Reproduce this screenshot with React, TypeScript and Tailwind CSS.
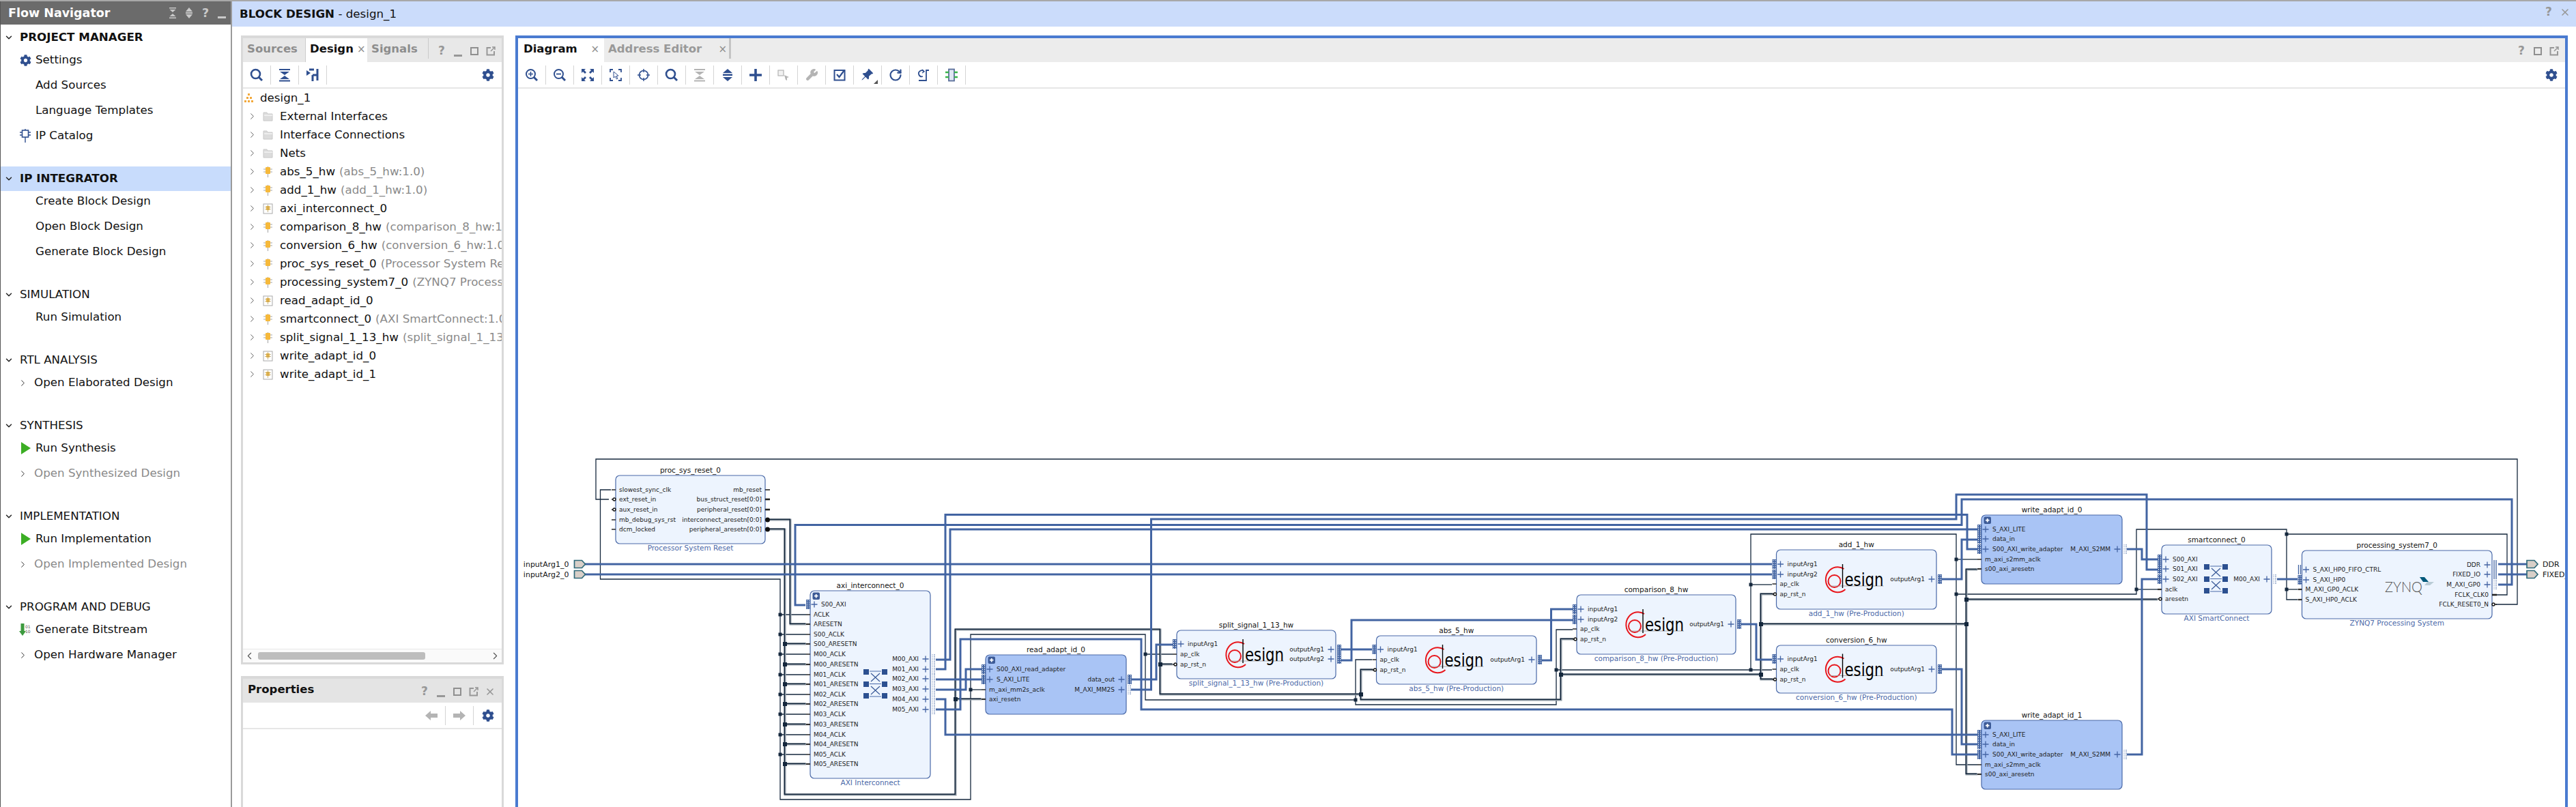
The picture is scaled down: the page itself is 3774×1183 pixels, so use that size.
import { ChevronDown, ChevronRight, ChevronLeft, RotateCw, Wrench, X } from 'lucide-react';
import { FaCog } from 'react-icons/fa';
import { BsPinAngleFill } from 'react-icons/bs';

const NAVY = '#2f4f8f';
const GRAY = '#b4b4b4';

// ---------- small window buttons ----------
function WinBtn({ kind }: { kind: string }) {
  return (
    <div className="flex h-6 w-6 items-center justify-center text-[#979797]">
      {kind === '?' && <span className="text-[17px] font-bold">?</span>}
      {kind === '_' && <div className="mt-[12px] h-[3px] w-[12px] bg-[#979797]" />}
      {kind === 'box' && <div className="h-[12px] w-[12px] border-2 border-[#8f8f8f]" />}
      {kind === 'pop' && (
        <svg width="14" height="14" viewBox="0 0 14 14">
          <path d="M7 2H1.5V12.5H12V7" fill="none" stroke="#979797" strokeWidth="2" />
          <path d="M7 7L13 1M9 1H13V5" fill="none" stroke="#979797" strokeWidth="1.5" />
        </svg>
      )}
      {kind === 'x' && <X size={16} strokeWidth={2.4} color="#979797" />}
    </div>
  );
}

function Mag({ children, w = 2 }: { children?: React.ReactNode; w?: number }) {
  return (
    <svg width="20" height="20" viewBox="0 0 20 20">
      <circle cx="8.5" cy="8.5" r="6.5" fill="none" stroke={NAVY} strokeWidth={w} />
      <path d="M13 13L18 18" stroke={NAVY} strokeWidth="3" />
      {children}
    </svg>
  );
}

const toolbarIcons = [
  <Mag key="zi"><path d="M8.5 5V12M5 8.5H12" stroke={NAVY} strokeWidth="1.6" /></Mag>,
  <Mag key="zo"><path d="M5 8.5H12" stroke={NAVY} strokeWidth="1.8" /></Mag>,
  <svg key="fit" width="20" height="20" viewBox="0 0 20 20" fill={NAVY}>
    <path d="M1 1H7L5 3L8 6L6 8L3 5L1 7Z" />
    <path d="M19 1H13L15 3L12 6L14 8L17 5L19 7Z" />
    <path d="M1 19H7L5 17L8 14L6 12L3 15L1 13Z" />
    <path d="M19 19H13L15 17L12 14L14 12L17 15L19 13Z" />
  </svg>,
  <svg key="sel" width="20" height="20" viewBox="0 0 20 20" fill="none">
    <path d="M6 2H2V6M14 2H18V6M2 14V18H6M18 14V18H14" stroke={NAVY} strokeWidth="1.8" />
    <path d="M7 5L7 14L9.5 12L11.5 16L13 15L11 11.5L14 11Z" stroke={NAVY} strokeWidth="1" fill="#fff" />
  </svg>,
  <svg key="cross" width="20" height="20" viewBox="0 0 20 20" fill="none">
    <circle cx="10" cy="10" r="6.5" stroke={NAVY} strokeWidth="1.6" />
    <path d="M10 1V6M10 14V19M1 10H6M14 10H19" stroke={NAVY} strokeWidth="1.4" />
  </svg>,
  <Mag key="search" w={2.6} />,
  <svg key="col" width="20" height="20" viewBox="0 0 20 20" fill={GRAY}>
    <path d="M2 1H18V3H2ZM3 5H17L10 10ZM10 11L17 16H3ZM2 17.5H18V19.5H2Z" />
  </svg>,
  <svg key="exp" width="20" height="20" viewBox="0 0 20 20" fill={NAVY}>
    <path d="M10 1L17 7H3ZM3 8.5H17V11H3ZM3 13H17L10 19Z" />
  </svg>,
  <svg key="plus" width="20" height="20" viewBox="0 0 20 20">
    <path d="M10 1V19M1 10H19" stroke={NAVY} strokeWidth="3.6" />
  </svg>,
  <svg key="dis" width="20" height="20" viewBox="0 0 20 20" fill="none">
    <rect x="2" y="3" width="8" height="8" stroke={GRAY} strokeWidth="1.2" fill="#f1f1f1" />
    <path d="M11 10L18 13L15 14L15 18L13 17Z" fill={GRAY} />
  </svg>,
  <Wrench key="wr" size={19} color={GRAY} fill={GRAY} strokeWidth={1.5} />,
  <svg key="chk" width="20" height="20" viewBox="0 0 20 20" fill="none">
    <rect x="2.5" y="3" width="15" height="14.5" stroke={NAVY} strokeWidth="2" />
    <path d="M6 9L9.5 13L17 3" stroke={NAVY} strokeWidth="2.2" />
  </svg>,
  <div key="pin" className="relative h-5 w-5">
    <BsPinAngleFill size={19} color={NAVY} />
    <div className="absolute -bottom-[3px] -right-[5px] h-0 w-0 border-b-[6px] border-l-[6px] border-b-[#555] border-l-transparent" />
  </div>,
  <RotateCw key="rot" size={20} color={NAVY} strokeWidth={2.6} />,
  <svg key="reg" width="20" height="20" viewBox="0 0 20 20" fill="none">
    <path d="M11 5A4.5 4.5 0 1 0 9 12" stroke={NAVY} strokeWidth="1.8" />
    <path d="M8 2L11 5L8 7" stroke={NAVY} strokeWidth="1.4" />
    <path d="M18 3H14V18H3" stroke={NAVY} strokeWidth="1.8" />
  </svg>,
  <svg key="chip" width="20" height="20" viewBox="0 0 20 20" fill="none">
    <rect x="6" y="1.5" width="8" height="17" stroke="#5a6f9a" strokeWidth="1.8" fill="#dfe6f3" />
    <path d="M1 6H6M14 6H19M1 13H6M14 13H19" stroke="#39b54a" strokeWidth="2.4" />
  </svg>,
];

// ---------- nav ----------
type NavItem = { label: string; icon?: string; muted?: boolean };
type NavSection = { title: string; bold?: boolean; active?: boolean; items: NavItem[] };

const navSections: NavSection[] = [
  {
    title: 'PROJECT MANAGER',
    bold: true,
    items: [{ label: 'Settings', icon: 'gear' }, { label: 'Add Sources' }, { label: 'Language Templates' }, { label: 'IP Catalog', icon: 'ip' }],
  },
  {
    title: 'IP INTEGRATOR',
    bold: true,
    active: true,
    items: [{ label: 'Create Block Design' }, { label: 'Open Block Design' }, { label: 'Generate Block Design' }],
  },
  { title: 'SIMULATION', items: [{ label: 'Run Simulation' }] },
  { title: 'RTL ANALYSIS', items: [{ label: 'Open Elaborated Design', icon: 'chev' }] },
  {
    title: 'SYNTHESIS',
    items: [{ label: 'Run Synthesis', icon: 'play' }, { label: 'Open Synthesized Design', icon: 'chev', muted: true }],
  },
  {
    title: 'IMPLEMENTATION',
    items: [{ label: 'Run Implementation', icon: 'play' }, { label: 'Open Implemented Design', icon: 'chev', muted: true }],
  },
  {
    title: 'PROGRAM AND DEBUG',
    items: [{ label: 'Generate Bitstream', icon: 'bit' }, { label: 'Open Hardware Manager', icon: 'chev' }],
  },
];

function NavIcon({ icon }: { icon: string }) {
  if (icon === 'gear') return <FaCog size={17} color={NAVY} />;
  if (icon === 'ip')
    return (
      <svg width="18" height="20" viewBox="0 0 18 20" fill="none">
        <rect x="4.5" y="2" width="9" height="10" stroke={NAVY} strokeWidth="1.6" />
        <path d="M9 0V2M9 12V20M1 5H4.5M1 9H4.5M13.5 5H17M13.5 9H17" stroke={NAVY} strokeWidth="1.4" />
      </svg>
    );
  if (icon === 'play')
    return (
      <svg width="15" height="18" viewBox="0 0 15 18">
        <path d="M1 0L15 9L1 18Z" fill="#3cae24" />
      </svg>
    );
  if (icon === 'bit')
    return (
      <svg width="18" height="18" viewBox="0 0 18 18">
        <path d="M2.5 0H7.5V11H10L5 18L0 11H2.5Z" fill="#3d9a3f" />
        <text x="9" y="7" fontSize="6" fill="#555">01</text>
        <text x="9" y="14" fontSize="6" fill="#555">10</text>
      </svg>
    );
  return null;
}

function FlowNavigator() {
  return (
    <div className="flex w-[340px] shrink-0 flex-col border-x border-r-2 border-l-[#555] border-r-[#9a9a9a] bg-white">
      <div className="flex h-[34px] items-center bg-[#6b6b6b] pl-[11px] pr-[1px] text-[17.5px] font-bold text-white">
        <span className="flex-1">Flow Navigator</span>
        <div className="flex w-6 justify-center">
          <svg width="12" height="16" viewBox="0 0 12 16" fill="#c9c9c9">
            <path d="M1 0H11V1.5H1ZM1.5 3H10.5L6 7ZM6 9L10.5 13H1.5ZM1 14.5H11V16H1Z" />
          </svg>
        </div>
        <div className="flex w-6 justify-center">
          <svg width="12" height="16" viewBox="0 0 12 16" fill="#c9c9c9">
            <path d="M6 0L11 6H1ZM1 7H11V9H1ZM1 10H11L6 16Z" />
          </svg>
        </div>
        <span className="w-6 text-center text-[#c9c9c9]">?</span>
        <div className="flex w-6 justify-center">
          <div className="mt-[12px] h-[3px] w-[12px] bg-[#c9c9c9]" />
        </div>
      </div>
      <div className="flex flex-col gap-[30px] pt-px text-[16.7px] text-[#111]">
        {navSections.map((section) => (
          <div key={section.title}>
            <div className={`flex h-9 items-center ${section.active ? 'bg-[#c8dcfc]' : ''} ${section.bold ? 'font-bold' : ''}`}>
              <ChevronDown size={14} strokeWidth={2.5} className="ml-[5px] text-[#222]" />
              <span className="ml-[9px]">{section.title}</span>
            </div>
            <div className="flex flex-col gap-[7px]">
              {section.items.map((item) => (
                <div key={item.label} className={`flex h-[30px] items-center ${item.muted ? 'text-[#8a8a8a]' : ''}`}>
                  {item.icon === 'chev' ? (
                    <>
                      <ChevronRight size={15} strokeWidth={1.6} className="ml-[25px] text-[#333]" />
                      <span className="ml-[9px]">{item.label}</span>
                    </>
                  ) : (
                    <>
                      <div className="ml-[27px] flex w-[18px] justify-center">{item.icon && <NavIcon icon={item.icon} />}</div>
                      <span className="ml-[6px]">{item.label}</span>
                    </>
                  )}
                </div>
              ))}
            </div>
          </div>
        ))}
      </div>
    </div>
  );
}

// ---------- hierarchy tree ----------
const treeRows: { name: string; ref?: string; icon: string }[] = [
  { name: 'External Interfaces', icon: 'folder' },
  { name: 'Interface Connections', icon: 'folder' },
  { name: 'Nets', icon: 'folder' },
  { name: 'abs_5_hw', ref: '(abs_5_hw:1.0)', icon: 'ip' },
  { name: 'add_1_hw', ref: '(add_1_hw:1.0)', icon: 'ip' },
  { name: 'axi_interconnect_0', icon: 'box' },
  { name: 'comparison_8_hw', ref: '(comparison_8_hw:1.0)', icon: 'ip' },
  { name: 'conversion_6_hw', ref: '(conversion_6_hw:1.0)', icon: 'ip' },
  { name: 'proc_sys_reset_0', ref: '(Processor System Reset:5.0)', icon: 'ip' },
  { name: 'processing_system7_0', ref: '(ZYNQ7 Processing System:5.5)', icon: 'ip' },
  { name: 'read_adapt_id_0', icon: 'box' },
  { name: 'smartconnect_0', ref: '(AXI SmartConnect:1.0)', icon: 'ip' },
  { name: 'split_signal_1_13_hw', ref: '(split_signal_1_13_hw:1.0)', icon: 'ip' },
  { name: 'write_adapt_id_0', icon: 'box' },
  { name: 'write_adapt_id_1', icon: 'box' },
];

function TreeIcon({ kind }: { kind: string }) {
  if (kind === 'folder')
    return (
      <svg width="15" height="14" viewBox="0 0 15 14">
        <path d="M1 1H6L7 3H14V13H1Z" fill="#dcdcdc" stroke="#c8c8c8" />
        <path d="M2 5H14" stroke="#fff" />
      </svg>
    );
  if (kind === 'box')
    return (
      <svg width="15" height="16" viewBox="0 0 15 16">
        <rect x="1" y="1" width="13" height="14" fill="#fff" stroke="#a9a9a9" />
        <rect x="5" y="4" width="5" height="6" fill="#f6b93b" />
        <path d="M7.5 2V13M3 5.5H12M3 8.5H12" stroke="#b9a36a" strokeWidth="0.8" />
      </svg>
    );
  return (
    <svg width="15" height="16" viewBox="0 0 15 16">
      <path d="M7.5 0V16M1 4H14M1 8H14" stroke="#a4a4a4" strokeWidth="1" />
      <rect x="4" y="1" width="7" height="10" rx="1" fill="#f6b93b" />
    </svg>
  );
}

function SourcesPanel() {
  return (
    <div className="flex h-[922px] flex-col border-x-[3px] border-b-[3px] border-t-4 border-[#d9d9d9] bg-white">
      <div className="flex h-[35px] shrink-0 items-center bg-[#e8e8e8] text-[16.5px] font-bold text-[#8d8d8d]">
        <span className="w-[91px] pb-[3px] pl-[6px]">Sources</span>
        <div className="flex h-full w-[91px] items-center border-l border-[#ccc] bg-white pb-[3px] pl-[6px] text-[#111]">
          Design<span className="ml-[5px] text-[15px] font-normal text-[#8d8d8d]">×</span>
        </div>
        <span className="ml-[6px] w-[83px] pb-[3px]">Signals</span>
        <div className="h-[30px] self-start border-l border-[#c9c9c9]" />
        <div className="ml-auto flex pr-[4px] pt-[3px]">
          {['?', '_', 'box', 'pop'].map((k) => <WinBtn key={k} kind={k} />)}
        </div>
      </div>
      <div className="flex h-[39px] shrink-0 items-center border-b-2 border-[#e6e6e6]">
        <ToolBtn><Mag w={2.6} /></ToolBtn>
        <ToolBtn>
          <svg width="20" height="20" viewBox="0 0 20 20" fill={NAVY}>
            <path d="M2 1H18V3H2ZM3 5H17L10 10ZM10 11L17 16H3ZM2 17.5H18V19.5H2Z" />
          </svg>
        </ToolBtn>
        <ToolBtn>
          <svg width="20" height="20" viewBox="0 0 20 20" fill="none">
            <path d="M1 3L7 7L1 11Z" fill={NAVY} />
            <path d="M5 2H12M17 1V18M10 10H17M10 10V19" stroke={NAVY} strokeWidth="3" />
          </svg>
        </ToolBtn>
        <div className="ml-auto flex w-[41px] justify-center"><FaCog size={18} color={NAVY} /></div>
      </div>
      <div className="min-h-0 flex-1 overflow-hidden text-[16.7px] text-[#111]">
        <div className="flex h-[27px] items-center">
          <svg width="15" height="14" viewBox="0 0 15 14" fill="#f2a93b" className="ml-px">
            <rect x="6" y="0" width="3" height="3" />
            <rect x="4" y="5" width="3" height="3" />
            <rect x="9" y="5" width="3" height="3" />
            <rect x="1" y="10" width="3" height="3" />
            <rect x="6" y="10" width="3" height="3" />
            <rect x="11" y="10" width="3" height="3" />
          </svg>
          <span className="ml-[9px]">design_1</span>
        </div>
        {treeRows.map((row) => (
          <div key={row.name} className="flex h-[27px] items-center whitespace-nowrap">
            <ChevronRight size={15} strokeWidth={1.5} className="ml-[6px] shrink-0 text-[#555]" />
            <div className="ml-[8px] flex w-[15px] shrink-0 justify-center"><TreeIcon kind={row.icon} /></div>
            <span className="ml-[10px]">{row.name}</span>
            {row.ref && <span className="ml-[6px] text-[#8a8a8a]">{row.ref}</span>}
          </div>
        ))}
      </div>
      <div className="flex h-[20px] shrink-0 items-center border-t border-[#e8e8e8] bg-[#fafafa]">
        <ChevronLeft size={17} strokeWidth={1.6} className="ml-px text-[#555]" />
        <div className="ml-[4px] h-[11px] w-[245px] rounded-[3px] bg-[#bdbdbd]" />
        <ChevronRight size={17} strokeWidth={1.6} className="ml-auto mr-px text-[#555]" />
      </div>
    </div>
  );
}

function ToolBtn({ children }: { children: React.ReactNode }) {
  return <div className="flex h-[28px] w-[41px] shrink-0 items-center justify-center border-r border-[#d4d4d4]">{children}</div>;
}

function PropertiesPanel() {
  return (
    <div className="mt-[17px] flex h-[240px] flex-col border-x-[3px] border-t-4 border-[#d9d9d9] bg-white">
      <div className="flex h-[35px] shrink-0 items-center bg-[#e4e4e4] pl-[7px] text-[16.5px] font-bold text-[#111]">
        <span className="pb-[3px]">Properties</span>
        <div className="ml-auto flex pr-[5px] pt-[3px]">
          {['?', '_', 'box', 'pop', 'x'].map((k) => <WinBtn key={k} kind={k} />)}
        </div>
      </div>
      <div className="flex h-[39px] shrink-0 items-center justify-end border-b-2 border-[#e6e6e6]">
        <ToolBtn>
          <svg width="18" height="14" viewBox="0 0 18 14" fill={GRAY}><path d="M0 7L8 0V4H18V10H8V14Z" /></svg>
        </ToolBtn>
        <ToolBtn>
          <svg width="18" height="14" viewBox="0 0 18 14" fill={GRAY}><path d="M18 7L10 0V4H0V10H10V14Z" /></svg>
        </ToolBtn>
        <div className="flex w-[41px] justify-center"><FaCog size={18} color={NAVY} /></div>
      </div>
    </div>
  );
}

// ---------- block diagram ----------
type Port = [string, number, string];
type Block = {
  name: string;
  sub?: string;
  x: number;
  y: number;
  w: number;
  h: number;
  dark?: boolean;
  logo?: boolean;
  plusBtn?: boolean;
  left: Port[];
  right: Port[];
};

const blocks: Block[] = [
  {
    name: 'proc_sys_reset_0', sub: 'Processor System Reset', x: 902, y: 697, w: 219, h: 100,
    left: [['slowest_sync_clk', 718, 'p'], ['ext_reset_in', 732, 'i'], ['aux_reset_in', 747, 'i'], ['mb_debug_sys_rst', 762, 'p'], ['dcm_locked', 776, 'p']],
    right: [['mb_reset', 718, 'p'], ['bus_struct_reset[0:0]', 732, 'T'], ['peripheral_reset[0:0]', 747, 'T'], ['interconnect_aresetn[0:0]', 762, 'o'], ['peripheral_aresetn[0:0]', 776, 'o']],
  },
  {
    name: 'axi_interconnect_0', sub: 'AXI Interconnect', x: 1187, y: 866, w: 176, h: 275, plusBtn: true,
    left: [['S00_AXI', 886, 'b'], ['ACLK', 901, 'p'], ['ARESETN', 915, 'T'], ['S00_ACLK', 930, 'p'], ['S00_ARESETN', 944, 'T'], ['M00_ACLK', 959, 'p'], ['M00_ARESETN', 974, 'T'], ['M01_ACLK', 989, 'p'], ['M01_ARESETN', 1003, 'T'], ['M02_ACLK', 1018, 'p'], ['M02_ARESETN', 1032, 'T'], ['M03_ACLK', 1047, 'p'], ['M03_ARESETN', 1062, 'T'], ['M04_ACLK', 1077, 'p'], ['M04_ARESETN', 1091, 'T'], ['M05_ACLK', 1106, 'p'], ['M05_ARESETN', 1120, 'T']],
    right: [['M00_AXI', 966, 'l'], ['M01_AXI', 981, 'l'], ['M02_AXI', 995, 'l'], ['M03_AXI', 1010, 'l'], ['M04_AXI', 1025, 'l'], ['M05_AXI', 1040, 'l']],
  },
  {
    name: 'read_adapt_id_0', x: 1444, y: 960, w: 206, h: 87, dark: true, plusBtn: true,
    left: [['S00_AXI_read_adapter', 981, 'b'], ['S_AXI_LITE', 996, 'b'], ['m_axi_mm2s_aclk', 1011, 'p'], ['axi_resetn', 1025, 'T']],
    right: [['data_out', 996, 'b'], ['M_AXI_MM2S', 1011, 'l']],
  },
  {
    name: 'split_signal_1_13_hw', sub: 'split_signal_1_13_hw (Pre-Production)', x: 1724, y: 924, w: 233, h: 71, logo: true,
    left: [['inputArg1', 944, 'b'], ['ap_clk', 959, 'p'], ['ap_rst_n', 974, 'i']],
    right: [['outputArg1', 952, 'b'], ['outputArg2', 966, 'b']],
  },
  {
    name: 'abs_5_hw', sub: 'abs_5_hw (Pre-Production)', x: 2016.5, y: 932, w: 234.5, h: 71, logo: true,
    left: [['inputArg1', 952, 'b'], ['ap_clk', 967, 'p'], ['ap_rst_n', 982, 'i']],
    right: [['outputArg1', 967, 'b']],
  },
  {
    name: 'comparison_8_hw', sub: 'comparison_8_hw (Pre-Production)', x: 2310, y: 872, w: 233, h: 87, logo: true,
    left: [['inputArg1', 893, 'b'], ['inputArg2', 908, 'b'], ['ap_clk', 922, 'p'], ['ap_rst_n', 937, 'i']],
    right: [['outputArg1', 915, 'b']],
  },
  {
    name: 'add_1_hw', sub: 'add_1_hw (Pre-Production)', x: 2602.5, y: 806, w: 234.5, h: 87, logo: true,
    left: [['inputArg1', 827, 'b'], ['inputArg2', 842, 'b'], ['ap_clk', 856, 'p'], ['ap_rst_n', 871, 'i']],
    right: [['outputArg1', 849, 'b']],
  },
  {
    name: 'conversion_6_hw', sub: 'conversion_6_hw (Pre-Production)', x: 2602.5, y: 946, w: 234.5, h: 70, logo: true,
    left: [['inputArg1', 966, 'b'], ['ap_clk', 981, 'p'], ['ap_rst_n', 996, 'i']],
    right: [['outputArg1', 981, 'b']],
  },
  {
    name: 'write_adapt_id_0', x: 2903, y: 755, w: 206, h: 101, dark: true, plusBtn: true,
    left: [['S_AXI_LITE', 776, 'b'], ['data_in', 790, 'b'], ['S00_AXI_write_adapter', 805, 'b'], ['m_axi_s2mm_aclk', 820, 'p'], ['s00_axi_aresetn', 834, 'T']],
    right: [['M_AXI_S2MM', 805, 'l']],
  },
  {
    name: 'write_adapt_id_1', x: 2903, y: 1056, w: 206, h: 101, dark: true, plusBtn: true,
    left: [['S_AXI_LITE', 1077, 'b'], ['data_in', 1091, 'b'], ['S00_AXI_write_adapter', 1106, 'b'], ['m_axi_s2mm_aclk', 1121, 'p'], ['s00_axi_aresetn', 1135, 'T']],
    right: [['M_AXI_S2MM', 1106, 'l']],
  },
  {
    name: 'smartconnect_0', sub: 'AXI SmartConnect', x: 3167, y: 799, w: 161, h: 101,
    left: [['S00_AXI', 820, 'b'], ['S01_AXI', 834, 'b'], ['S02_AXI', 849, 'b'], ['aclk', 864, 'T'], ['aresetn', 878, 'i']],
    right: [['M00_AXI', 849, 'l']],
  },
  {
    name: 'processing_system7_0', sub: 'ZYNQ7 Processing System', x: 3372.5, y: 807, w: 278.5, h: 100,
    left: [['S_AXI_HP0_FIFO_CTRL', 835, 's'], ['S_AXI_HP0', 850, 'b'], ['M_AXI_GP0_ACLK', 864, 'T'], ['S_AXI_HP0_ACLK', 879, 'T']],
    right: [['DDR', 828, 's'], ['FIXED_IO', 842, 's'], ['M_AXI_GP0', 857, 'l'], ['FCLK_CLK0', 872, 'T'], ['FCLK_RESET0_N', 886, 'i']],
  },
];

const busWires = [
  '1371,967 1392,967 1392,776 2897,776',
  '1371,981 1385,981 1385,754.5 2882,754.5 2882,805 2897,805',
  '1180,887 1165,887 1165,769.5 2874,769.5 2874,732 3680,732 3680,857 3660,857',
  '1371,996 1438,996',
  '1371,1011 1415,1011 1415,981 1438,981',
  '1371,1025 1385,1025 1385,1077 2897,1077',
  '1371,1040 1407,1040 1407,937 1672,937 1672,1040 2860,1040 2860,1106 2897,1106',
  '1657,996 1694,996 1694,945 1718,945',
  '1657,1011 1686.5,1011 1686.5,761 2866,761 2866,725 3145,725 3145,835 3161,835',
  '1965,952 2010,952',
  '1965,968 1980,968 1980,909 2304,909',
  '2259,968 2272.5,968 2272.5,893 2304,893',
  '2551,915 2573,915 2573,967 2596,967',
  '2845,849 2874,849 2874,791 2897,791',
  '2845,981 2874,981 2874,1091 2897,1091',
  '3116,805 3138,805 3138,820 3161,820',
  '3116,1106 3138,1106 3138,849 3161,849',
  '3336,849 3366,849',
  '857,827 2596,827',
  '857,842 2596,842',
  '3660,827 3702,827',
  '3660,842 3702,842',
];

const clkWires = [
  '895,718 879.5,718 879.5,849 1143,849 1143,1172 1422,1172 1422,930 1678,930 1678,1026 1986,1026 1986,967 2010,967',
  '1143,901 1181,901', '1143,930 1181,930', '1143,959 1181,959', '1143,989 1181,989', '1143,1018 1181,1018', '1143,1047 1181,1047', '1143,1077 1181,1077', '1143,1106 1181,1106',
  '1422,1011 1438,1011',
  '1678,959 1718,959',
  '1986,1026 1986,1033 2280,1033 2280,923 2304,923',
  '2280,982 2596,982',
  '2565,982 2565,783 2866,783 2866,1121 2897,1121',
  '2565,857 2596,857',
  '2866,820 2897,820',
  '2866,871 3130,871 3130,776 3350,776 3350,879 3366,879',
  '3130,864 3161,864',
  '3350,864 3366,864',
  '3350,783 3673,783 3673,872 3657,872',
  '892,732 873,732 873,673 3688,673 3688,886 3657,886',
];

const rstWires = [
  '1128,776 1150,776 1150,1165 1400,1165 1400,923 1700,923 1700,1018 1994,1018 1994,982 2012,982',
  '1128,762 1158,762 1158,915 1181,915',
  '1150,944 1181,944', '1150,974 1181,974', '1150,1003 1181,1003', '1150,1032 1181,1032', '1150,1062 1181,1062', '1150,1091 1181,1091', '1150,1120 1181,1120',
  '1400,1025 1438,1025',
  '1700,974 1718,974',
  '1994,1018 1994,1026 2287,1026 2287,937 2306,937',
  '2287,989 2580,989',
  '2598,871 2580,871 2580,996 2598,996',
  '2580,915 2881,915',
  '2897,835 2881,835 2881,1135 2897,1135',
  '2881,879 3161,879',
];

const clkDots = [
  [1143, 901], [1143, 930], [1143, 959], [1143, 989], [1143, 1018], [1143, 1047], [1143, 1077], [1143, 1106],
  [1422, 1011], [1678, 959], [1986, 1026], [2280, 982], [2565, 982], [2565, 857], [2866, 820], [2866, 871], [3130, 864], [3350, 783], [3350, 864],
];
const rstDots = [
  [1150, 944], [1150, 974], [1150, 1003], [1150, 1032], [1150, 1062], [1150, 1091], [1150, 1120],
  [1400, 1025], [1700, 974], [1994, 1018], [2287, 989], [2580, 989], [2580, 915], [2881, 915], [2881, 879],
];

const BLUE = '#4264a2';
const INK = '#14273c';

function Plus({ x, y }: { x: number; y: number }) {
  return <path d={`M${x - 4.5} ${y}H${x + 4.5}M${x} ${y - 4.5}V${y + 4.5}`} stroke="#4464a4" strokeWidth="1.3" />;
}

function BusMark({ x, y, kind }: { x: number; y: number; kind: string }) {
  if (kind === 'l')
    return (
      <g stroke={BLUE} strokeWidth="1" strokeDasharray="1.5 1">
        <path d={`M${x + 1} ${y - 7}V${y + 7}`} opacity="0.6" />
        <path d={`M${x + 4} ${y - 7}V${y + 7}`} />
      </g>
    );
  if (kind === 's')
    return (
      <path d={`M${x + 1} ${y - 7}V${y + 7}M${x + 4} ${y - 7}V${y + 7}`} stroke={BLUE} strokeWidth="1.3" />
    );
  return (
    <g>
      <rect x={x} y={y - 7} width="6" height="14" fill={BLUE} />
      <path d={`M${x + 1.5} ${y - 6}V${y + 7}M${x + 4.5} ${y - 6}V${y + 7}`} stroke="#fff" strokeWidth="1" strokeDasharray="1.5 1.5" />
    </g>
  );
}

function DesignLogo({ b }: { b: Block }) {
  const lx = b.x + 97;
  const ty = b.y + b.h / 2 - 22.5;
  const cx = lx - 12;
  const cy = ty + 25;
  return (
    <g>
      <path d={`M${lx + 2} ${ty + 7}A17.5 18.5 0 1 0 ${lx + 4} ${ty + 37}`} fill="none" stroke="#e8161c" strokeWidth="2" />
      <circle cx={cx} cy={cy} r="9" fill="none" stroke="#e8161c" strokeWidth="2" />
      <path d={`M${lx - 19} ${ty + 32}H${lx + 60}`} stroke="#999" strokeWidth="0.8" />
      <path d={`M${lx} ${ty}V${ty + 35}`} stroke="#000" strokeWidth="1.4" />
      <text x={lx + 3} y={ty + 32} fontSize="26" fill="#000" textLength="57" lengthAdjust="spacingAndGlyphs">esign</text>
    </g>
  );
}

function Crossbar({ x, y }: { x: number; y: number }) {
  return (
    <g>
      {[0, 18, 35].map((dy) => (
        <g key={dy} fill="#2c5090">
          <rect x={x} y={y + dy} width="8" height="8" />
          <rect x={x + 27} y={y + dy} width="8" height="8" />
        </g>
      ))}
      <path d={`M${x + 9} ${y + 3}H${x + 26}M${x + 9} ${y + 21.5}H${x + 26}M${x + 9} ${y + 40}H${x + 26}`} stroke="#4a6aa8" strokeWidth="1.2" />
      <path d={`M${x + 11} ${y + 6}L${x + 24} ${y + 18}M${x + 24} ${y + 6}L${x + 11} ${y + 18}M${x + 11} ${y + 25}L${x + 24} ${y + 37}M${x + 24} ${y + 25}L${x + 11} ${y + 37}`} stroke="#3a5a98" strokeWidth="1.2" />
    </g>
  );
}

function BlockNode({ b }: { b: Block }) {
  const cx = b.x + b.w / 2;
  const rx = b.x + b.w;
  return (
    <g>
      <text x={cx} y={b.y - 4} textAnchor="middle" fontSize="10.5" fill="#111">{b.name}</text>
      <rect x={b.x} y={b.y} width={b.w} height={b.h} rx="6" fill={b.dark ? '#a9c4f5' : '#edf4fe'} stroke="#4a69a8" strokeWidth="1.2" />
      {b.sub && <text x={cx} y={b.y + b.h + 10} textAnchor="middle" fontSize="10.5" fill="#4a68a8">{b.sub}</text>}
      {b.plusBtn && (
        <g>
          <rect x={b.x + 3.5} y={b.y + 2.5} width="10.5" height="10.5" rx="2" fill="#3c5a96" />
          <path d={`M${b.x + 6} ${b.y + 7.7}H${b.x + 11.5}M${b.x + 8.7} ${b.y + 5}V${b.y + 10.5}`} stroke="#fff" strokeWidth="1.8" />
        </g>
      )}
      {b.left.map(([label, y, kind]) => {
        const isBus = kind === 'b' || kind === 's' || kind === 'l';
        return (
          <g key={label}>
            {isBus ? (
              <>
                <BusMark x={b.x - 6} y={y} kind={kind} />
                <Plus x={b.x + 6} y={y} />
              </>
            ) : (
              <path d={`M${b.x - 6} ${y}H${b.x}`} stroke="#333" strokeWidth={kind === 'T' ? 2.2 : 1.6} />
            )}
            {kind === 'i' && <circle cx={b.x - 2} cy={y} r="2" fill="#fff" stroke="#111" strokeWidth="1.3" />}
            <text x={b.x + (isBus ? 16 : 5)} y={y + 3} fontSize="9" fill="#222">{label}</text>
          </g>
        );
      })}
      {b.right.map(([label, y, kind]) => {
        const isBus = kind === 'b' || kind === 's' || kind === 'l';
        return (
          <g key={label}>
            {isBus ? (
              <>
                <BusMark x={rx + 2} y={y} kind={kind} />
                <Plus x={rx - 7} y={y} />
              </>
            ) : kind === 'o' ? (
              <circle cx={rx + 3.5} cy={y} r="3.5" fill="#111" />
            ) : (
              <path d={`M${rx} ${y}H${rx + 7}`} stroke="#222" strokeWidth={kind === 'T' ? 2.6 : 1.6} />
            )}
            {kind === 'i' && <circle cx={rx + 2} cy={y} r="2" fill="#fff" stroke="#111" strokeWidth="1.3" />}
            <text x={rx - (isBus ? 17 : 5)} y={y + 3} textAnchor="end" fontSize="9" fill="#222">{label}</text>
          </g>
        );
      })}
      {b.logo && <DesignLogo b={b} />}
    </g>
  );
}

function ExtPort({ x, y, label, side }: { x: number; y: number; label: string; side: 'l' | 'r' }) {
  return (
    <g>
      <path d={`M${x} ${y - 5.5}H${x + 11}L${x + 16} ${y}L${x + 11} ${y + 5.5}H${x}Z`} fill="#d8cfc8" stroke="#2f6a7a" strokeWidth="1.7" />
      {side === 'l' ? (
        <text x={x - 8} y={y + 4} textAnchor="end" fontSize="11" fill="#111">{label}</text>
      ) : (
        <text x={x + 23} y={y + 4} fontSize="11" fill="#111">{label}</text>
      )}
    </g>
  );
}

function BlockDiagram() {
  return (
    <svg width="2999" height="1053" viewBox="759 130 2999 1053" className="block bg-white">
      {clkWires.map((p) => <polyline key={p} points={p} fill="none" stroke={INK} strokeWidth="1.3" />)}
      {rstWires.map((p) => (
        <g key={p}>
          <polyline points={p} fill="none" stroke="#8e99a3" strokeWidth="3" />
          <polyline points={p} fill="none" stroke={INK} strokeWidth="1.5" transform="translate(-0.7 -0.7)" />
        </g>
      ))}
      {busWires.map((p) => <polyline key={p} points={p} fill="none" stroke={BLUE} strokeWidth="3" />)}
      {clkDots.map(([x, y]) => <rect key={`${x}-${y}`} x={x - 2.5} y={y - 2.5} width="5" height="5" fill={INK} />)}
      {rstDots.map(([x, y]) => <rect key={`${x}-${y}`} x={x - 3} y={y - 3} width="6" height="6" fill={INK} />)}

      {blocks.map((b) => <BlockNode key={b.name} b={b} />)}
      <Crossbar x={1265} y={981} />
      <Crossbar x={3229} y={827} />

      <ExtPort x={841.5} y={827} label="inputArg1_0" side="l" />
      <ExtPort x={841.5} y={842} label="inputArg2_0" side="l" />
      <ExtPort x={3702} y={827} label="DDR" side="r" />
      <ExtPort x={3702} y={842} label="FIXED_IO" side="r" />

      <text x={3494} y={868} fontSize="22" fontWeight="300" fill="#555" className="[font-family:Lato,sans-serif]" textLength="55" lengthAdjust="spacingAndGlyphs">ZYNQ</text>
      <path d="M3545 846H3552L3558 853H3550Z" fill="#00587a" />
      <path d="M3556 853H3566L3560 858H3552Z" fill="#b9ccd6" />
    </svg>
  );
}

function DiagramPanel() {
  return (
    <div className="flex h-[1140px] flex-1 flex-col overflow-hidden border-4 border-[#4a7bd0] bg-white">
      <div className="flex h-[35px] shrink-0 items-center bg-[#ececec] text-[16.5px] font-bold">
        <div className="flex h-full w-[126px] items-center bg-white pb-[3px] pl-[8px] text-[#111]">
          Diagram<span className="ml-auto mr-[7px] text-[15px] font-normal text-[#8d8d8d]">×</span>
        </div>
        <div className="flex h-[30px] w-[186px] items-center self-start border-r-[3px] border-[#c4c4c4] pl-[6px] pt-[2px] text-[#999]">
          Address Editor<span className="ml-auto mr-[3px] text-[15px] font-normal text-[#8d8d8d]">×</span>
        </div>
        <div className="ml-auto flex pr-[4px] pt-[3px]">
          {['?', 'box', 'pop'].map((k) => <WinBtn key={k} kind={k} />)}
        </div>
      </div>
      <div className="flex h-[39px] shrink-0 items-center border-b-2 border-[#e6e6e6]">
        {toolbarIcons.map((icon, i) => <ToolBtn key={i}>{icon}</ToolBtn>)}
        <div className="ml-auto flex w-[41px] justify-center"><FaCog size={18} color={NAVY} /></div>
      </div>
      <BlockDiagram />
    </div>
  );
}

export default function App() {
  return (
    <div className="flex h-[1183px] w-[3774px] overflow-hidden border-t-2 border-[#a8a8a8] bg-white [font-family:'DejaVu_Sans',sans-serif]">
      <FlowNavigator />
      <div className="flex min-w-0 flex-1 flex-col">
        <div className="flex h-[37px] shrink-0 items-center bg-[#cbdcfb] pl-[11px] pr-[4px] text-[16.7px] text-[#111]">
          <span><b>BLOCK DESIGN</b> - design_1</span>
          <div className="ml-auto flex pb-[6px]">
            <WinBtn kind="?" />
            <WinBtn kind="x" />
          </div>
        </div>
        <div className="flex gap-[17px] pl-[13px] pr-[12px] pt-[13px]">
          <div className="flex w-[385px] shrink-0 flex-col">
            <SourcesPanel />
            <PropertiesPanel />
          </div>
          <DiagramPanel />
        </div>
      </div>
    </div>
  );
}
